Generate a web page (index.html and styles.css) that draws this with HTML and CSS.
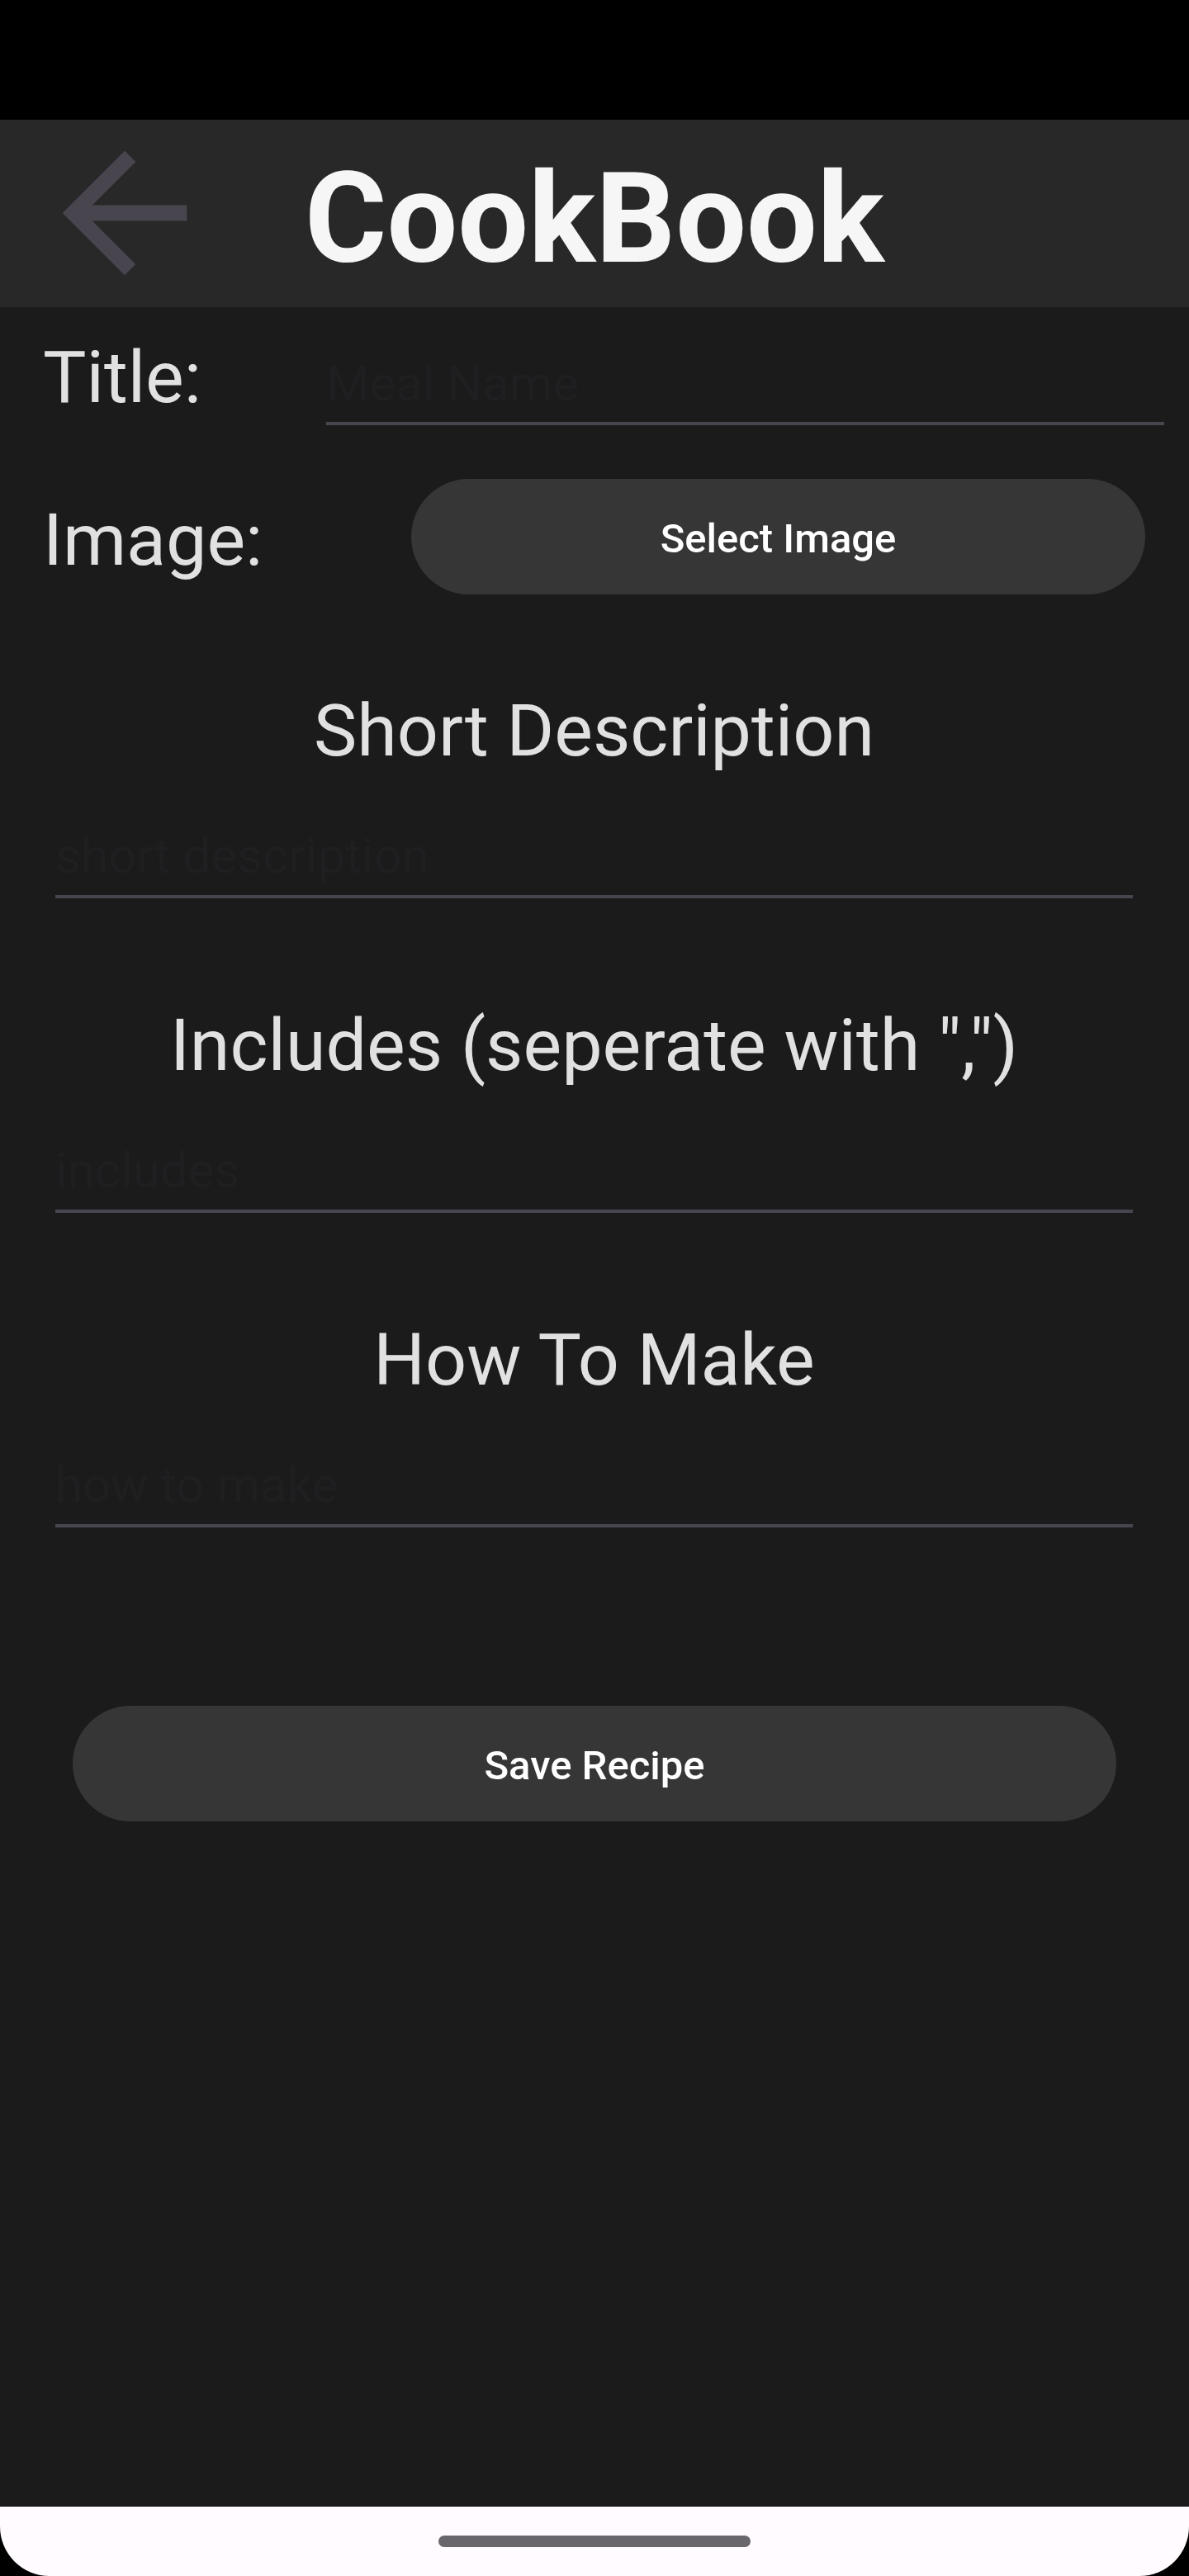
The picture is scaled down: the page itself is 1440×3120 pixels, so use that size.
FILE: index.html
```html
<!DOCTYPE html>
<html lang="en">
<head>
<meta charset="utf-8">
<title>CookBook</title>
<link rel="stylesheet" href="styles.css">
</head>
<body>
<div class="screen">
  <div class="status"></div>
  <header class="appbar">
    <svg class="back" viewBox="0 0 24 24" aria-hidden="true"><path d="M20 11H7.83l5.59-5.59L12 4l-8 8 8 8 1.41-1.41L7.83 13H20v-2z"/></svg>
    <h1 class="app-title">CookBook</h1>
  </header>
  <main class="content">
    <div class="row row-title">
      <div class="label label-title">Title:</div>
      <div class="field field-title"><span class="ph">Meal Name</span></div>
    </div>
    <div class="row row-image">
      <div class="label label-image">Image:</div>
      <div class="btn btn-select">Select Image</div>
    </div>
    <section class="section section-first">
      <div class="heading">Short Description</div>
      <div class="field"><span class="ph">short description</span></div>
    </section>
    <section class="section">
      <div class="heading">Includes (seperate with ",")</div>
      <div class="field"><span class="ph">includes</span></div>
    </section>
    <section class="section">
      <div class="heading">How To Make</div>
      <div class="field"><span class="ph">how to make</span></div>
    </section>
    <div class="btn btn-save">Save Recipe</div>
  </main>
  <div class="navbar"><div class="pill"></div></div>
</div>
</body>
</html>
```

FILE: styles.css
```css
html, body {
  margin: 0;
  padding: 0;
  background: #000;
}

.screen {
  width: 1440px;
  height: 3120px;
  display: flex;
  flex-direction: column;
  font-family: Roboto, "Noto Sans", sans-serif;
  background: #000;
}

.status {
  flex: none;
  height: 145px;
  background: #000;
}

.appbar {
  flex: none;
  height: 227px;
  background: #282828;
  display: flex;
  align-items: flex-start;
}

.back {
  flex: none;
  width: 226px;
  height: 226px;
  margin-left: 38px;
  fill: #49454f;
}

.app-title {
  margin: 44px 0 0 105px;
  font-size: 152px;
  line-height: 152px;
  font-weight: 700;
  color: #f6f6f6;
}

.content {
  flex: 1;
  background: #1b1b1b;
  display: flex;
  flex-direction: column;
}

.row {
  display: flex;
  align-items: flex-start;
  padding-left: 52px;
}

.row-title {
  margin-top: 33px;
  padding-right: 30px;
}

.row-image {
  margin-top: 65px;
  padding-right: 53px;
}

.label {
  flex: none;
  font-size: 88px;
  line-height: 103px;
  color: #e1e1e1;
}

.label-title {
  width: 343px;
}

.label-image {
  width: 446px;
  margin-top: 22px;
}

.field {
  border-bottom: 4px solid #47454e;
  padding-bottom: 13px;
  margin-top: 66px;
}

.field-title {
  flex: 1;
  margin-top: 0;
  padding-top: 25px;
  padding-bottom: 12px;
}

.ph {
  display: block;
  font-size: 60px;
  line-height: 69px;
  color: #1f1f22;
}

.btn {
  height: 140px;
  box-sizing: border-box;
  padding-top: 4px;
  border-radius: 70px;
  background: #363636;
  display: flex;
  align-items: center;
  justify-content: center;
  color: #ffffff;
  font-size: 49px;
  font-weight: 500;
}

.btn-select {
  flex: 1;
}

.section {
  margin: 126px 68px 0 67px;
}

.section-first {
  margin-top: 113px;
}

.heading {
  font-size: 88px;
  line-height: 103px;
  text-align: center;
  color: #e1e1e1;
}

.btn-save {
  margin: 216px 88px 0 88px;
}

.navbar {
  flex: none;
  height: 84px;
  box-sizing: border-box;
  padding-top: 35px;
  background: #fffbfe;
  border-radius: 0 0 60px 60px;
  display: flex;
  justify-content: center;
}

.pill {
  width: 378px;
  height: 14px;
  border-radius: 7px;
  background: #69676b;
}
```
